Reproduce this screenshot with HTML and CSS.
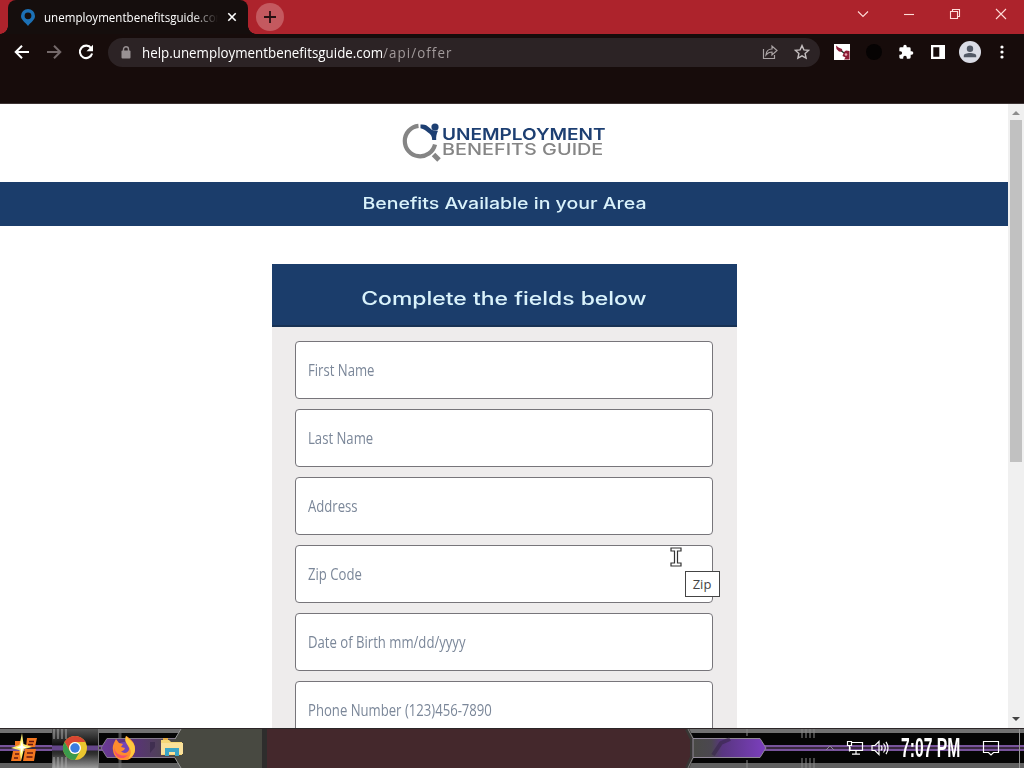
FILE: index.html
```html
<!DOCTYPE html>
<html lang="en">
<head>
<meta charset="utf-8">
<title>Unemployment Benefits Guide</title>
<link rel="stylesheet" href="styles.css">
</head>
<body>
<div class="desktop">
  <header class="tabstrip">
    <div class="tab">
      <svg class="pin" width="14" height="17" viewBox="0 0 14 17"><path fill="#1c70b5" fill-rule="evenodd" d="M7 0a7 7 0 0 0-7 7c0 4 4 6 7 10 3-4 7-6 7-10a7 7 0 0 0-7-7zM7 3.400a3.400 3.400 0 1 1 0 6.800 3.400 3.400 0 0 1 0-6.800z"/></svg>
      <div class="tab-title"><span class="fit-tab">unemploymentbenefitsguide.com</span></div>
      <svg class="tab-close" width="10" height="10" viewBox="0 0 10 10"><path d="M1.300 1.300l7.400 7.400M8.700 1.300L1.300 8.700" stroke="#fff" stroke-width="1.600"/></svg>
    </div>
    <div class="new-tab"><svg width="14" height="14" viewBox="0 0 14 14"><path d="M7 1v12M1 7h12" stroke="#271012" stroke-width="1.800"/></svg></div>
    <div class="window-controls">
      <svg width="12" height="12" viewBox="0 0 12 12"><path d="M1 3.500l5 5 5-5"/></svg>
      <svg width="12" height="12" viewBox="0 0 12 12"><path d="M1 6.500h10"/></svg>
      <svg width="12" height="12" viewBox="0 0 12 12"><path d="M1.500 3.500h7v7h-7zM3.500 3.500v-2h7v7h-2"/></svg>
      <svg width="12" height="12" viewBox="0 0 12 12"><path d="M1 1l10 10M11 1L1 11"/></svg>
    </div>
  </header>

  <nav class="toolbar">
    <div class="nav-icons">
      <svg width="16" height="16" viewBox="0 0 16 16" fill="none" stroke="#fff" stroke-width="2"><path d="M15 8H2.500M8 1.700L1.700 8 8 14.300"/></svg>
      <svg width="16" height="16" viewBox="0 0 16 16" fill="none" stroke="#74696a" stroke-width="2"><path d="M1 8h12.500M8 1.700L14.300 8 8 14.300"/></svg>
      <svg width="16" height="16" viewBox="0 0 16 16"><path d="M13.200 4.300A6.200 6.200 0 1 0 14.100 9.500" fill="none" stroke="#fff" stroke-width="2.100"/><path d="M15 .8v6.500H8.500z" fill="#fff"/></svg>
    </div>
    <div class="omnibox">
      <svg class="lock" width="10" height="13" viewBox="0 0 10 13"><rect x=".5" y="4.500" width="9" height="8" rx="1" fill="#989193"/><path d="M2.500 5V3.300a2.500 2.500 0 0 1 5 0V5" fill="none" stroke="#989193" stroke-width="1.400"/></svg>
      <div class="url"><span class="fit-url">help.unemploymentbenefitsguide.com<span class="path">/api/offer</span></span></div>
      <svg width="16" height="16" viewBox="0 0 16 16" fill="none" stroke="#aaa3a4" stroke-width="1.200"><path d="M1.500 5v9.500h11V11M4 11c.3-4 2.500-6 6-6V2l5 4.500-5 4.500V8C7.500 8 5.500 9 4 11z"/></svg>
      <svg width="16" height="16" viewBox="0 0 16 16" fill="none" stroke="#c5bfc0" stroke-width="1.400"><path d="M8 1.600l1.900 4.300 4.700.5-3.500 3.100 1 4.700L8 11.800l-4.100 2.400 1-4.700-3.500-3.100 4.700-.5z"/></svg>
    </div>
    <div class="extensions">
      <svg width="16" height="16" viewBox="0 0 16 16"><path fill="#fff" d="M0 0h16v16H0z"/><path fill="#8e1c36" d="M2 1.500l2.500 2L8 5l.5 3L5 7.500 2.500 5zM10 8l2-1.500 3.500.5v8.500H10l1.500-2L8.500 12z"/><path d="M7.500 7l2.500 2" stroke="#26352f" stroke-width="1.500"/><circle cx="12" cy="10.500" r="1.300" fill="#e8a9b5"/></svg>
      <svg width="16" height="16" viewBox="0 0 16 16"><circle cx="8" cy="8" r="8" fill="#060303"/></svg>
      <svg width="16" height="16" viewBox="0 0 24 24"><path fill="#fff" d="M20.500 11H19V7a2 2 0 0 0-2-2h-4V3.500a2.500 2.500 0 0 0-5 0V5H4a2 2 0 0 0-2 2v3.800h1.500a2.700 2.700 0 0 1 0 5.400H2V20a2 2 0 0 0 2 2h3.800v-1.500a2.700 2.700 0 0 1 5.400 0V22H17a2 2 0 0 0 2-2v-4h1.500a2.500 2.500 0 0 0 0-5z"/></svg>
      <svg width="16" height="16" viewBox="0 0 16 16"><path fill="#fff" fill-rule="evenodd" d="M1 1h14v14H1zM3.300 3.300v9.400h6V3.300z"/></svg>
      <svg width="22" height="22" viewBox="0 0 22 22"><circle cx="11" cy="11" r="11" fill="#dadce5"/><circle cx="11" cy="7.800" r="3.200" fill="#525966"/><path d="M4.800 16.200v-1.400c0-3.600 12.400-3.600 12.400 0v1.400z" fill="#525966"/></svg>
      <svg width="16" height="16" viewBox="0 0 16 16" fill="#fff"><circle cx="8" cy="3" r="1.600"/><circle cx="8" cy="8" r="1.600"/><circle cx="8" cy="13" r="1.600"/></svg>
    </div>
  </nav>

  <div class="viewport">
    <main class="page">
      <div class="brand">
        <svg class="lens" width="39" height="40" viewBox="0 0 39 40">
          <path d="M16.500 3.800A15.300 15.300 0 1 0 33 22.500" fill="none" stroke="#858585" stroke-width="4.200"/>
          <path d="M31.500 32.500l5.500 5.500" stroke="#858585" stroke-width="5"/>
          <path d="M18.500 2.500c4-.5 6.500.7 9 3.200 1.500 1.500 3 2.600 5 2.800l3.500.3c-1.500 3-2 6-1.800 9.200h-4c0-4-1.700-6-4.200-7.500-2-2-4-3.500-7.500-4.300z" fill="#1d3f72"/>
          <circle cx="33" cy="5" r="3.600" fill="#1d3f72"/>
        </svg>
        <div class="wordmark">
          <div class="logo-top"><span>UNEMPLOYMENT</span></div>
          <div class="logo-bottom"><span>BENEFITS GUIDE</span></div>
        </div>
      </div>
      <div class="banner"><span class="fit-banner">Benefits Available in your Area</span></div>
      <section class="card">
        <h1 class="card-head"><span class="fit-head">Complete the fields below</span></h1>
        <div class="fields">
          <div class="field"><span>First Name</span></div>
          <div class="field"><span>Last Name</span></div>
          <div class="field"><span>Address</span></div>
          <div class="field zip-field"><span>Zip Code</span>
            <svg class="caret" width="12" height="20" viewBox="0 0 12 20"><path d="M1 1h10v3H7.500v12H11v3H1v-3h3.500V4H1z" fill="#fff" stroke="#333" stroke-width="1.200"/></svg>
            <div class="tip">Zip</div>
          </div>
          <div class="field"><span>Date of Birth mm/dd/yyyy</span></div>
          <div class="field"><span>Phone Number (123)456-7890</span></div>
        </div>
      </section>
    </main>
    <aside class="scrollbar">
      <svg width="16" height="16" viewBox="0 0 16 16"><path d="M4 11l4-4 4 4z" fill="#8d8d8d"/></svg>
      <div class="thumb"></div>
      <svg class="down" width="16" height="16" viewBox="0 0 16 16"><path d="M4 5l4 4 4-4z" fill="#444"/></svg>
    </aside>
  </div>

  <footer class="taskbar">
    <svg class="taskbar-art" width="1024" height="40" viewBox="0 0 1024 40">
      <defs>
        <linearGradient id="purple"><stop offset="0" stop-color="#6c3a99"/><stop offset=".45" stop-color="#593476"/><stop offset="1" stop-color="#494a43"/></linearGradient>
        <linearGradient id="violet"><stop offset="0" stop-color="#494a45"/><stop offset=".25" stop-color="#4b4750"/><stop offset=".4" stop-color="#593681"/><stop offset="1" stop-color="#7c3fbf"/></linearGradient>
        <linearGradient id="active" x1="0" y1="0" x2="0" y2="1"><stop offset="0" stop-color="#555"/><stop offset=".4" stop-color="#111"/><stop offset=".65" stop-color="#333"/><stop offset="1" stop-color="#999"/></linearGradient>
      </defs>
      <path fill="#050505" d="M0 0h1024v40H0z"/>
      <path fill="#727272" d="M0 1h1024v4H0z"/>
      <path fill="#606060" d="M0 35h1024v5H0z"/>
      <path fill="#39283f" d="M0 17h1024v6H0z"/>
      <path d="M0 18h1024M0 22h1024" stroke="#8c61bb" stroke-width="1.500"/>
      <path fill="url(#active)" d="M52 1h46v39H52z"/>
      <path stroke="#aaa" stroke-width="2" opacity=".5" d="M54 1v10M58 1v10M62 1v10M66 1v10M54 29v11M58 29v11M62 29v11M66 29v11"/>
      <path d="M52 20h46" stroke="#65468a" stroke-width="5"/>
      <path d="M98.500 1v39" stroke="#777"/>
      <path fill="url(#purple)" stroke="#857b8c" d="M101 20l6-9.500h70v19h-70z"/>
      <path d="M150 14h5v5l-5 6z" fill="#39294a" opacity=".7"/>
      <path d="M120 1v9M120 30v10" stroke="#777" stroke-width="3" opacity=".6"/>
      <path fill="#484941" d="M181 1h84v39h-84l-6-10V11z"/>
      <path d="M181 1l-6 10M175 30l6 10" stroke="#999"/>
      <path fill="#2e2d2c" d="M262 1h6v39h-6z"/>
      <path fill="#44282c" d="M267 1h420l6 12v14l-6 13H267z"/>
      <path d="M687 1l5 10v18l-5 11" fill="none" stroke="#383634" stroke-width="4"/>
      <path fill="url(#violet)" stroke="#918998" d="M693 10.500h67l6 9.500-6 9.500h-67z"/>
      <path d="M688 1l5 9.500M693 29.500L688 40" fill="none" stroke="#aaa" opacity=".65"/>
      <path d="M713 27l8-12 9-4" fill="none" stroke="#37274a" stroke-width="4" opacity=".6"/>
      <path stroke="#888" stroke-width="2" opacity=".5" d="M802 1v9M806 1v9M810 1v9M814 1v9M802 30v10M806 30v10M810 30v10M814 30v10M747 1v7M747 32v8"/>
      <path d="M1019.500 1v39" stroke="#969696"/>
      <path d="M0 .5h1024" stroke="#2b2527"/>
    </svg>
    <div class="apps">
      <svg width="28" height="30" viewBox="0 0 28 30"><path d="M5 8h8v5H5zM3 18h8v10H1zM17 5h10l-2 9h-9zM15 16h11l-2 12H13z" fill="#f27620"/><path d="M19 8.500h5M18 11.500h5M17 20h6M16.500 24h6M5 21h4M4 25h4" stroke="#651812" stroke-width="1.500"/><path d="M12 0l1.500 11L22 14l-8 2-3 12-1.500-11L1 15l8.500-3z" fill="#fff176"/><path d="M12 8l1 5 4 1.500-4 1-1.500 5-1-5-4-1 4-1.500z" fill="#fff"/></svg>
      <svg width="24" height="24" viewBox="0 0 24 24"><circle cx="12" cy="12" r="12" fill="#eac52f"/><path d="M1.600 6A12 12 0 0 1 22.400 6H12a6 6 0 0 0-5.200 9z" fill="#d94632"/><path d="M1.600 6A12 12 0 0 0 12 24l5.200-9A6 6 0 0 1 6.800 15z" fill="#3b9a4c"/><circle cx="12" cy="12" r="6" fill="#fff"/><circle cx="12" cy="12" r="4.700" fill="#397de0"/></svg>
      <svg width="24" height="24" viewBox="0 0 24 24"><circle cx="12" cy="13" r="7" fill="#7545b7"/><path d="M4 3l3 4 4 1-2 3 4 1c-1 3-3 3-4 3 3 4 9 1 8-3-1-4-5-5-3-12 4 2 9 6 9 13a11 11 0 0 1-22 1C0 10 2 7 4 3z" fill="#ff8b2e"/><path d="M14 0c3 4 9 6 9 13 0 5-3 8-7 10 4-5 3-9 1-12-2-4-5-5-3-11z" fill="#ffc83e"/><path d="M2 11c1 7 7 10 14 8-4 5-14 5-14-8z" fill="#f5506b"/></svg>
      <svg width="22" height="20" viewBox="0 0 22 20"><path d="M0 2h8l2 2h11v13H0z" fill="#f6d778"/><path d="M0 5h22v11H0z" fill="#fae19a"/><path d="M4 18v-8h14v8h-4v-4H8v4z" fill="#3ba4c6"/><path d="M2 1h5" stroke="#e6ad48" stroke-width="2"/></svg>
    </div>
    <div class="tray">
      <svg width="10" height="8" viewBox="0 0 10 8"><path d="M1 6l4-4 4 4" fill="none" stroke="#8c8794"/></svg>
      <svg width="18" height="16" viewBox="0 0 18 16" fill="none" stroke="#fff" stroke-width="1.200"><path d="M6 2.500h10.500v8H4V7M10 10.500V14M6 14.200h8M1.500 1.500h4v4h-4zM3.500 5.500v6"/></svg>
      <svg width="18" height="16" viewBox="0 0 18 16" fill="none" stroke="#fff" stroke-width="1.200"><path d="M1 5.500h3l4-4v13l-4-4H1zM10 5.500q2 2.500 0 5M12.500 3.500q3.500 4.500 0 9M15 1.800q4 6.200 0 12.400"/></svg>
      <div class="clock"><span>7:07 PM</span></div>
      <svg width="18" height="18" viewBox="0 0 18 18" fill="none" stroke="#fff" stroke-width="1.200"><path d="M1.500 2.500h15v11h-5L9 16l-2.500-2.500h-5z"/></svg>
    </div>
  </footer>
</div>
</body>
</html>
```

FILE: styles.css
```css
* { box-sizing: border-box; }
body { margin: 0; font-family: "Open Sans", "Noto Sans", sans-serif; }
svg { display: block; flex: none; }
.desktop { width: 1024px; height: 768px; display: flex; flex-direction: column; overflow: hidden; background: #fff; }

.tabstrip { height: 34px; flex: none; display: flex; background: #ad232c; }
.tab { position: relative; width: 240px; height: 34px; margin-left: 8px; padding-left: 13px; display: flex; align-items: center; background: #150e0d; border-radius: 8px 8px 0 0; }
.tab::before, .tab::after { content: ""; position: absolute; bottom: 0; width: 8px; height: 8px; }
.tab::before { left: -8px; background: radial-gradient(circle at 0 0, transparent 7.5px, #150e0d 8px); }
.tab::after { right: -8px; background: radial-gradient(circle at 100% 0, transparent 7.5px, #150e0d 8px); }
.tab-title { width: 174px; margin-left: 9px; overflow: hidden; white-space: nowrap; font-size: 13px; line-height: 20px; color: #fff; -webkit-mask-image: linear-gradient(90deg, #000 85%, transparent); mask-image: linear-gradient(90deg, #000 85%, transparent); }
.tab-close { margin-left: 9px; }
.new-tab { width: 28px; height: 28px; margin: 3px 0 0 8px; border-radius: 50%; display: flex; align-items: center; justify-content: center; background: #c4595f; }
.window-controls { margin-left: auto; padding: 8px 17px 0 0; display: flex; gap: 34px; }
.window-controls path { fill: none; stroke: #ffdcd8; stroke-width: 1.1; }

.toolbar { height: 70px; flex: none; display: flex; padding: 4px 14px 0 14px; background: #170c0b; border-bottom: 1px solid #3d3434; }
.nav-icons { height: 28px; display: flex; align-items: center; gap: 16px; }
.omnibox { width: 712px; height: 29px; margin-left: 14px; padding: 0 10px 1px 13px; border-radius: 15px; background: #2c2325; display: flex; align-items: center; gap: 16px; }
.lock { margin-right: -5px; }
.url { flex: 1; white-space: nowrap; font-size: 15px; font-weight: 500; color: #fff; }
.path { color: #a29a9b; font-weight: 400; letter-spacing: 1.2px; }
.extensions { height: 28px; margin-left: auto; display: flex; align-items: center; gap: 16px; }
.extensions svg:nth-child(5) { margin: 0 -3px; }
.fit-tab, .fit-url, .fit-banner, .fit-head { display: inline-block; transform-origin: 0 50%; white-space: nowrap; }
.fit-tab { transform: scaleX(.89); font-weight: 500; }
.fit-url { transform: scaleX(.89); }

.viewport { height: 624px; flex: none; display: flex; overflow: hidden; }
.page { width: 1008px; display: flex; flex-direction: column; align-items: center; }
.brand { width: 204px; height: 78px; flex: none; padding-top: 18px; display: flex; align-items: flex-start; gap: 1px; }
.wordmark { padding-top: 5px; white-space: nowrap; font: 500 16px/15px Inter, sans-serif; }
.logo-top, .logo-bottom { height: 15px; }
.wordmark span { display: inline-block; transform-origin: 0 50%; }
.logo-top { color: #1d3f72; font-weight: 600; }
.logo-top span { transform: scaleX(1.19); }
.logo-bottom { color: #858585; }
.logo-bottom span { transform: scaleX(1.24); }
.banner { width: 100%; height: 44px; flex: none; display: flex; align-items: center; justify-content: center; background: #1b3d6b; color: #d9f2fb; font: 450 16px/42px Inter, sans-serif; padding-bottom: 2px; }
.fit-banner, .fit-head { transform-origin: center; }
.fit-banner { transform: scaleX(1.22); }
.card { width: 465px; margin-top: 38px; flex: none; background: #eeecec; }
.card-head { height: 63px; margin: 0; display: flex; align-items: center; justify-content: center; padding-top: 8px; background: #1b3d6b; border-bottom: 2px solid #183254; color: #d9f2fb; font: 500 18px/40px Inter, sans-serif; }
.fit-head { transform: scaleX(1.275); }
.fields { padding: 14px 24px 10px 23px; display: flex; flex-direction: column; gap: 10px; }
.field { height: 58px; border: 1px solid #77757a; border-radius: 4px; background: #fff; padding-left: 12px; display: flex; align-items: center; color: #7b8799; font-size: 16px; white-space: nowrap; }
.field > span { transform: scaleX(.82); transform-origin: 0 50%; }
.zip-field { position: relative; }
.caret { position: absolute; left: 374px; top: 1px; }
.tip { position: absolute; left: 389px; top: 25px; width: 35px; height: 26px; border: 1px solid #444; background: #fff; color: #444; font: 13px/25px "Open Sans", sans-serif; text-align: center; }
.scrollbar { width: 16px; display: flex; flex-direction: column; align-items: center; background: #f0f0f0; }
.thumb { width: 12px; height: 342px; background: #c1c1c1; }
.down { margin-top: auto; }

.taskbar { height: 40px; flex: none; position: relative; }
.taskbar-art { position: absolute; inset: 0; }
.apps, .tray { position: relative; display: flex; align-items: center; height: 40px; }
.apps { float: left; padding-left: 10px; gap: 25px; }
.tray { float: right; padding-right: 24px; gap: 7px; }
.tray svg:first-child { margin-right: 4px; }
.clock { width: 60px; height: 40px; margin: 0 14px 0 5px; display: flex; align-items: center; white-space: nowrap; color: #fff; font: bold 27px/40px "Liberation Sans", Arial, sans-serif; }
.clock span { transform: scaleX(.58); transform-origin: 0 50%; }
```
